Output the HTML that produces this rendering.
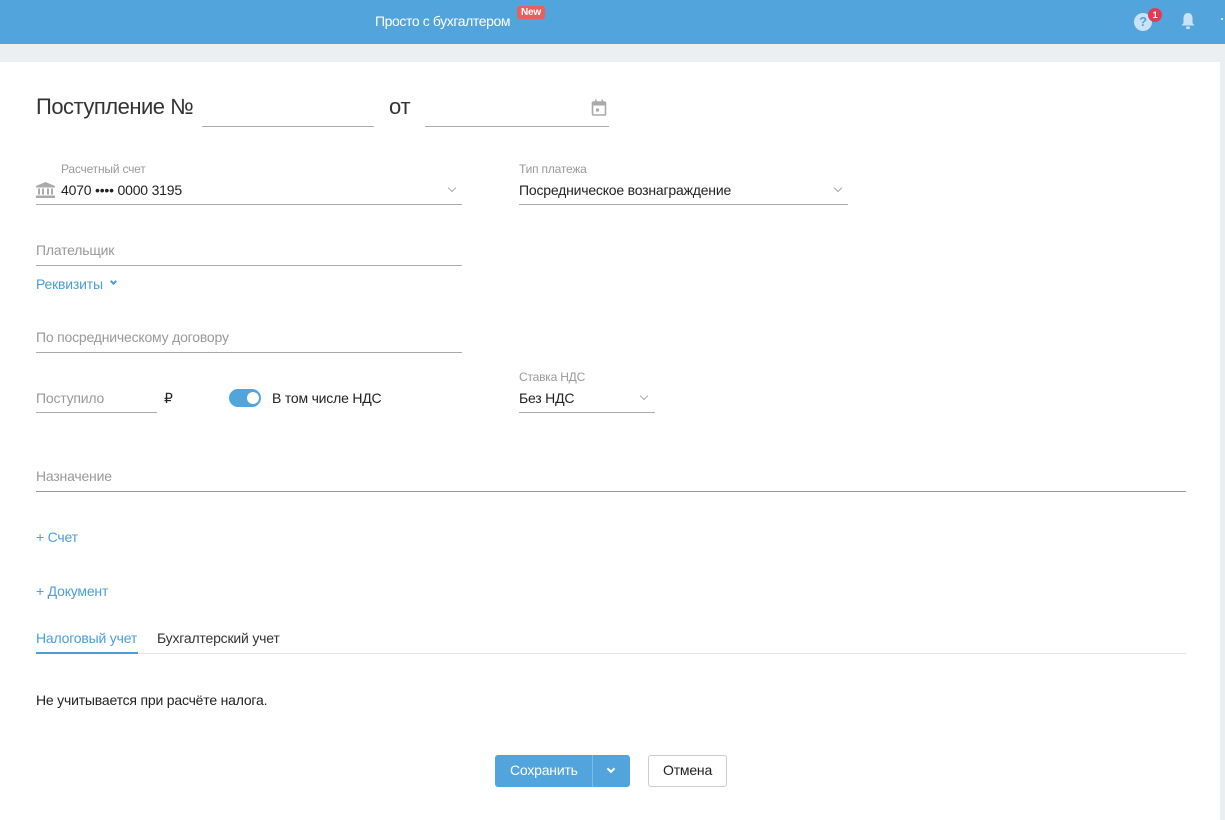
<!DOCTYPE html>
<html><head><meta charset="utf-8"><style>
*{margin:0;padding:0;box-sizing:border-box}
body{width:1225px;height:820px;overflow:hidden;background:#eceff2;font-family:"Liberation Sans",sans-serif;position:relative;color:#222;letter-spacing:-0.2px}
.a{position:absolute;white-space:nowrap}
.hdr{left:0;top:0;width:1225px;height:44px;background:#52a5dc}
.pg{left:0;top:62px;width:1220px;height:758px;background:#fff}
.ln{position:absolute;height:1px;background:#aaa}
.ph{color:#999;font-size:14px}
.lbl{color:#999;font-size:12px}
.v{font-size:14px;color:#222}
.blue{color:#4a9fd9;font-size:14px}
.chev{position:absolute;width:6px;height:6px;border-right:1.5px solid #aaa;border-bottom:1.5px solid #aaa;transform:rotate(45deg)}
</style></head><body>
<div class="a hdr"></div>
<div class="a" style="left:375px;top:13px;color:#fff;font-size:14px;letter-spacing:-0.4px">Просто с бухгалтером</div>
<div class="a" style="left:517px;top:6px;background:#e8605e;color:#fff;font-size:10px;font-weight:bold;padding:1px 4px;border-radius:3px">New</div>
<div class="a" style="left:1134px;top:13px;width:18px;height:18px;border-radius:50%;background:#c9e2f5;color:#52a5dc;font-weight:bold;font-size:13px;text-align:center;line-height:18px">?</div>
<div class="a" style="left:1148px;top:8px;width:14px;height:14px;border-radius:50%;background:#e23c55;color:#fff;font-size:9px;font-weight:bold;text-align:center;line-height:14px">1</div>
<svg class="a" style="left:1180px;top:12px" width="16" height="18" viewBox="0 0 16 18"><path d="M8 1C5 1 3.5 3.5 3.5 6v5L1.5 13.5h13L12.5 11V6C12.5 3.5 11 1 8 1z" fill="#c9e2f5"/><rect x="6" y="14.5" width="4" height="2.5" rx="1" fill="#c9e2f5"/></svg>
<div class="a" style="left:1221px;top:18px;width:2px;height:2px;background:#c9e2f5"></div>
<div class="a pg"></div>

<div class="a" style="left:36px;top:94px;font-size:22px;color:#333;letter-spacing:-0.5px">Поступление №</div>
<div class="ln" style="left:202px;top:126px;width:172px"></div>
<div class="a" style="left:389px;top:94px;font-size:22px;color:#333">от</div>
<div class="ln" style="left:425px;top:126px;width:184px"></div>
<svg class="a" style="left:591px;top:99px" width="16" height="18" viewBox="0 0 16 18"><rect x="1.5" y="3" width="13" height="13" rx="1" fill="none" stroke="#aaa" stroke-width="1.6"/><rect x="1.5" y="3" width="13" height="3.5" fill="#aaa"/><rect x="4" y="0.5" width="1.6" height="3" fill="#aaa"/><rect x="10.4" y="0.5" width="1.6" height="3" fill="#aaa"/><rect x="5" y="9.5" width="3" height="3" fill="#aaa"/></svg>

<div class="a lbl" style="left:61px;top:162px">Расчетный счет</div>
<svg class="a" style="left:36px;top:182px" width="19" height="16" viewBox="0 0 19 16"><path d="M9.5 0L0 4v1.5h19V4z" fill="#aaa"/><rect x="2" y="6.5" width="2" height="6" fill="#aaa"/><rect x="6" y="6.5" width="2" height="6" fill="#aaa"/><rect x="11" y="6.5" width="2" height="6" fill="#aaa"/><rect x="15" y="6.5" width="2" height="6" fill="#aaa"/><rect x="0" y="13.5" width="19" height="2.5" fill="#aaa"/></svg>
<div class="a v" style="left:61px;top:182px">4070 •••• 0000 3195</div>
<div class="chev" style="left:449px;top:185px"></div>
<div class="ln" style="left:36px;top:204px;width:426px"></div>

<div class="a lbl" style="left:519px;top:162px">Тип платежа</div>
<div class="a v" style="left:519px;top:182px">Посредническое вознаграждение</div>
<div class="chev" style="left:835px;top:185px"></div>
<div class="ln" style="left:519px;top:204px;width:329px"></div>

<div class="a ph" style="left:36px;top:242px">Плательщик</div>
<div class="ln" style="left:36px;top:265px;width:426px"></div>
<div class="a blue" style="left:36px;top:276px">Реквизиты</div>
<div class="chev" style="left:111px;top:279px;width:5px;height:5px;border-color:#4a9fd9;border-width:2px"></div>

<div class="a ph" style="left:36px;top:329px">По посредническому договору</div>
<div class="ln" style="left:36px;top:352px;width:426px"></div>

<div class="a ph" style="left:36px;top:390px">Поступило</div>
<div class="ln" style="left:36px;top:412px;width:121px"></div>
<div class="a v" style="left:164px;top:390px">₽</div>
<div class="a" style="left:229px;top:389px;width:32px;height:18px;border-radius:9px;background:#52a5dc"></div>
<div class="a" style="left:247px;top:392px;width:12px;height:12px;border-radius:50%;background:#fff"></div>
<div class="a v" style="left:272px;top:390px">В том числе НДС</div>

<div class="a lbl" style="left:519px;top:370px">Ставка НДС</div>
<div class="a v" style="left:519px;top:390px">Без НДС</div>
<div class="chev" style="left:641px;top:393px"></div>
<div class="ln" style="left:519px;top:412px;width:136px"></div>

<div class="a ph" style="left:36px;top:468px">Назначение</div>
<div class="ln" style="left:36px;top:491px;width:1150px;background:#999"></div>

<div class="a blue" style="left:36px;top:529px">+ Счет</div>
<div class="a blue" style="left:36px;top:583px">+ Документ</div>

<div class="a blue" style="left:36px;top:630px">Налоговый учет</div>
<div class="a v" style="left:157px;top:630px;color:#333">Бухгалтерский учет</div>
<div class="ln" style="left:36px;top:653px;width:1150px;background:#e5e5e5"></div>
<div class="a" style="left:36px;top:652px;width:102px;height:2px;background:#4a9fd9"></div>

<div class="a v" style="left:36px;top:692px">Не учитывается при расчёте налога.</div>

<div class="a" style="left:495px;top:755px;width:135px;height:32px;background:#52a5dc;border-radius:3px"></div>
<div class="a" style="left:592px;top:755px;width:1px;height:32px;background:#7bbbe6"></div>
<div class="a" style="left:510px;top:762px;color:#fff;font-size:14px">Сохранить</div>
<div class="chev" style="left:608px;top:766px;width:6px;height:6px;border-color:#fff;border-width:2px"></div>
<div class="a" style="left:648px;top:755px;width:79px;height:32px;border:1px solid #ccc;border-radius:3px;background:#fff"></div>
<div class="a v" style="left:663px;top:762px">Отмена</div>
</body></html>
